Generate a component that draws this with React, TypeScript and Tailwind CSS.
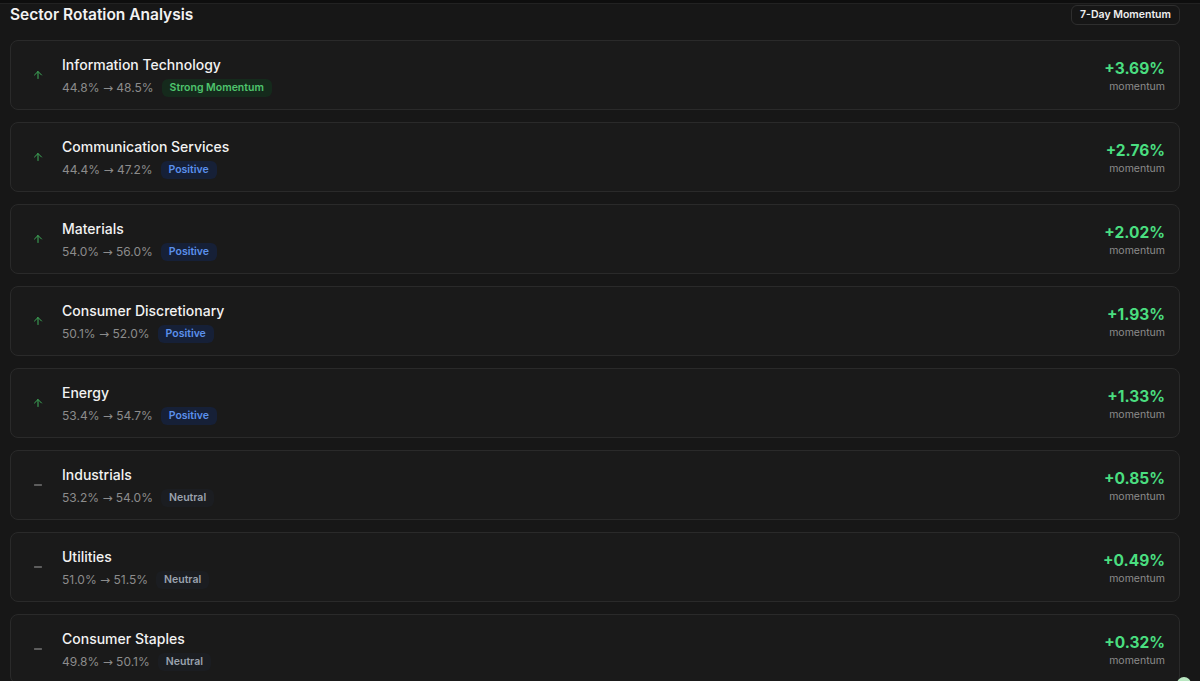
import { ArrowUp, Minus } from "lucide-react";

type Sector = {
  name: string;
  from: string;
  to: string;
  status: "strong" | "positive" | "neutral";
  momentum: string;
};

const sectors: Sector[] = [
  { name: "Information Technology", from: "44.8%", to: "48.5%", status: "strong", momentum: "+3.69%" },
  { name: "Communication Services", from: "44.4%", to: "47.2%", status: "positive", momentum: "+2.76%" },
  { name: "Materials", from: "54.0%", to: "56.0%", status: "positive", momentum: "+2.02%" },
  { name: "Consumer Discretionary", from: "50.1%", to: "52.0%", status: "positive", momentum: "+1.93%" },
  { name: "Energy", from: "53.4%", to: "54.7%", status: "positive", momentum: "+1.33%" },
  { name: "Industrials", from: "53.2%", to: "54.0%", status: "neutral", momentum: "+0.85%" },
  { name: "Utilities", from: "51.0%", to: "51.5%", status: "neutral", momentum: "+0.49%" },
  { name: "Consumer Staples", from: "49.8%", to: "50.1%", status: "neutral", momentum: "+0.32%" },
];

const statusStyles = {
  strong: { label: "Strong Momentum", cls: "bg-[#152a1c] text-[#4ec46d]" },
  positive: { label: "Positive", cls: "bg-[#162037] text-[#5b90ec]" },
  neutral: { label: "Neutral", cls: "bg-[#1b1d21] text-[#9aa2ae]" },
};

function SectorRow({ sector }: { sector: Sector }) {
  const status = statusStyles[sector.status];
  return (
    <div className="flex items-center h-[70px] pl-[19px] pr-[14px] rounded-lg border border-[#2a2a2a] bg-[#1a1a1a]">
      <div className="w-4 flex items-center justify-center shrink-0">
        {sector.status === "neutral" ? (
          <Minus size={12} strokeWidth={2} className="text-[#a0a0a0]" />
        ) : (
          <ArrowUp size={12} strokeWidth={2} className="text-[#3fae5a]" />
        )}
      </div>
      <div className="flex-1 min-w-0 ml-[16px] mt-[2px]">
        <div className="text-[14px] leading-6 font-medium text-[#f2f2f2]">{sector.name}</div>
        <div className="flex items-center gap-2 h-[22px]">
          <span className="text-[12px] text-[#8c8c8c]">
            {sector.from}{" "}
            <span style={{ fontFamily: "'DejaVu Sans', sans-serif" }}>→</span>{" "}
            {sector.to}
          </span>
          <span className={`px-2 h-[18px] flex items-center rounded-md text-[10.5px] font-semibold ${status.cls}`}>
            {status.label}
          </span>
        </div>
      </div>
      <div className="flex flex-col items-end mt-[4px]">
        <span className="text-[15.5px] leading-5 font-bold text-[#4ade80]">{sector.momentum}</span>
        <span className="text-[10.5px] leading-4 text-[#8c8c8c]">momentum</span>
      </div>
    </div>
  );
}

export default function App() {
  return (
    <div
      className="relative w-[1200px] h-[681px] overflow-hidden bg-[#171717] text-white"
      style={{ fontFamily: "Inter, 'Noto Sans', sans-serif" }}
    >
      <div className="h-[4px] bg-[#0e0e0e] border-b border-[#222]" />
      <div className="flex items-center justify-between h-[22px] pl-[10px] pr-[20px] mb-[14px]">
        <h2 className="text-[15.5px] font-semibold text-[#f2f2f2]">Sector Rotation Analysis</h2>
        <span className="px-2 h-[20px] flex items-center rounded-md border border-[#2e2e2e] bg-[#161616] text-[10.5px] font-semibold text-[#eeeeee]">
          7-Day Momentum
        </span>
      </div>
      <div className="flex flex-col gap-3 pl-[10px] pr-[20px]">
        {sectors.map((s) => (
          <SectorRow key={s.name} sector={s} />
        ))}
      </div>
      <div className="absolute left-[1177px] top-[677px] w-[14px] h-[14px] rounded-full bg-[#b8e6c0]" />
    </div>
  );
}
